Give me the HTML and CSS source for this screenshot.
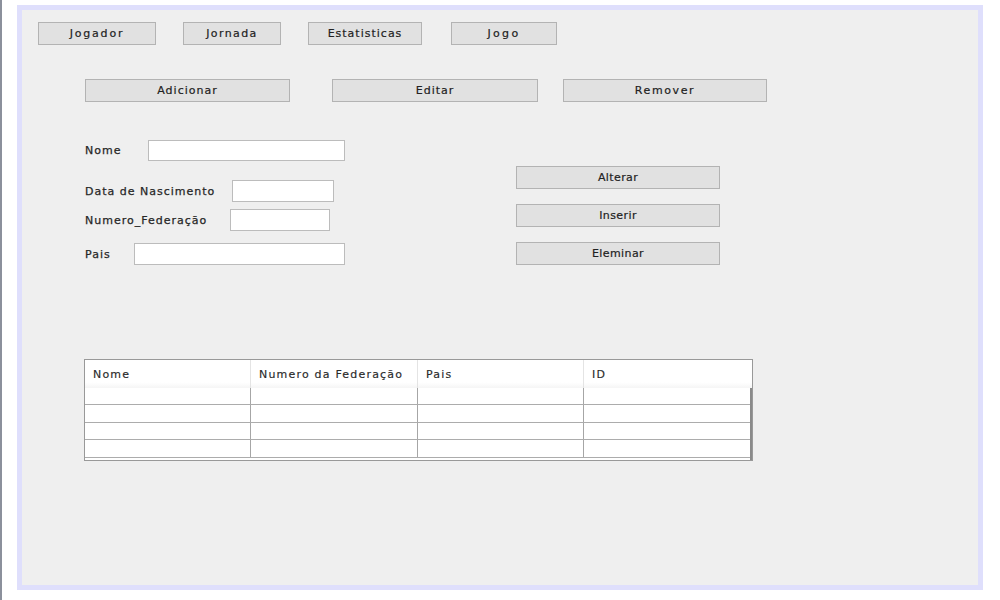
FILE: index.html
```html
<!DOCTYPE html>
<html lang="pt">
<head>
<meta charset="utf-8">
<title>Jogador</title>
<link rel="stylesheet" href="styles.css">
</head>
<body>
<div class="screen">
  <div class="edge"></div>
  <div class="frame">
    <nav class="tabs">
      <button class="btn tab tab-jogador">Jogador</button>
      <button class="btn tab tab-jornada">Jornada</button>
      <button class="btn tab tab-estat">Estatisticas</button>
      <button class="btn tab tab-jogo">Jogo</button>
    </nav>
    <div class="actions">
      <button class="btn act act-add">Adicionar</button>
      <button class="btn act act-edit">Editar</button>
      <button class="btn act act-rem">Remover</button>
    </div>
    <div class="editor">
      <div class="fields">
        <div class="row row-nome"><label class="lab lab-nome">Nome</label><input class="inp inp-nome" type="text"></div>
        <div class="row row-data"><label class="lab lab-data">Data de Nascimento</label><input class="inp inp-data" type="text"></div>
        <div class="row row-num"><label class="lab lab-num">Numero_Federação</label><input class="inp inp-num" type="text"></div>
        <div class="row row-pais"><label class="lab lab-pais">Pais</label><input class="inp inp-pais" type="text"></div>
      </div>
      <div class="ops">
        <button class="btn op">Alterar</button>
        <button class="btn op">Inserir</button>
        <button class="btn op">Eleminar</button>
      </div>
    </div>
    <div class="grid">
      <div class="ghead">
        <div class="hcell">Nome</div>
        <div class="hcell">Numero da Federação</div>
        <div class="hcell">Pais</div>
        <div class="hcell">ID</div>
      </div>
      <div class="gbody">
        <div class="grow"><div class="gcell"></div><div class="gcell"></div><div class="gcell"></div><div class="gcell"></div></div>
        <div class="grow"><div class="gcell"></div><div class="gcell"></div><div class="gcell"></div><div class="gcell"></div></div>
        <div class="grow"><div class="gcell"></div><div class="gcell"></div><div class="gcell"></div><div class="gcell"></div></div>
        <div class="grow"><div class="gcell"></div><div class="gcell"></div><div class="gcell"></div><div class="gcell"></div></div>
      </div>
    </div>
  </div>
</div>
</body>
</html>
```
FILE: styles.css
```css
* { box-sizing: border-box; }
html, body { margin: 0; padding: 0; background: #ffffff; }
body {
  font-family: "DejaVu Sans", Verdana, sans-serif;
  font-size: 11px;
  color: #262626;
}
.screen {
  display: flex;
  align-items: flex-start;
  width: 1000px;
  height: 600px;
  overflow: hidden;
}
.edge {
  width: 2px;
  height: 600px;
  background: #8b909c;
  flex: none;
}
.frame {
  flex: none;
  margin-left: 15px;
  margin-top: 5px;
  width: 966px;
  height: 585px;
  border: 5px solid #dfdffc;
  background: #efefef;
  padding-top: 12px;
}
.btn {
  display: block;
  margin: 0;
  padding: 0;
  height: 23px;
  background: #e1e1e1;
  border: 1px solid #b3b3b3;
  border-radius: 0;
  font-family: "DejaVu Sans", Verdana, sans-serif;
  font-size: 11px;
  color: #222222;
  -webkit-text-stroke: 0.2px #222222;
  letter-spacing: 1px;
  line-height: 21px;
  text-align: center;
}
.tabs {
  display: flex;
  margin-left: 16px;
}
.tab-jogador { width: 118px; letter-spacing: 1.8px; }
.tab-jornada { width: 98px; margin-left: 27px; letter-spacing: 1.4px; }
.tab-estat { width: 114px; margin-left: 27px; }
.tab-jogo { width: 106px; margin-left: 29px; letter-spacing: 2.3px; }

.actions {
  display: flex;
  margin-top: 34px;
  margin-left: 63px;
}
.act-add { width: 205px; }
.act-edit { width: 206px; margin-left: 42px; }
.act-rem { width: 204px; margin-left: 25px; letter-spacing: 1.6px; }

.editor {
  display: flex;
  margin-top: 37px;
  margin-left: 63px;
}
.fields {
  width: 431px;
  display: flex;
  flex-direction: column;
}
.row {
  display: flex;
  align-items: center;
  height: 22px;
}
.row-data { margin-top: 19px; }
.row-num { margin-top: 7px; }
.row-pais { margin-top: 12px; }
.lab {
  flex: none;
  letter-spacing: 1px;
  color: #262626;
  -webkit-text-stroke: 0.25px #262626;
  padding-top: 1px;
}
.lab-nome { width: 63px; }
.lab-data { width: 147px; }
.lab-num { width: 145px; }
.lab-pais { width: 49px; }
.inp {
  height: 22px;
  margin: 0;
  padding: 0 3px;
  background: #ffffff;
  border: 1px solid #bcbcbc;
  border-radius: 0;
  outline: none;
  font-family: "DejaVu Sans", Verdana, sans-serif;
  font-size: 11px;
}
.inp-nome { width: 197px; height: 21px; }
.inp-data { width: 102px; }
.inp-num { width: 100px; }
.inp-pais { width: 211px; }

.ops {
  display: flex;
  flex-direction: column;
  gap: 15px;
  margin-top: 27px;
  width: 204px;
}
.op { width: 204px; letter-spacing: 0.4px; }

.grid {
  margin-top: 94px;
  margin-left: 62px;
  width: 669px;
  height: 102px;
  border: 1px solid #999999;
  background: #ffffff;
}
.ghead {
  display: grid;
  grid-template-columns: 166px 167px 166px 168px;
  height: 28px;
  background: linear-gradient(#ffffff 0, #ffffff 80%, #f5f5f5 100%);
}
.hcell {
  padding-left: 8px;
  padding-top: 2px;
  line-height: 26px;
  letter-spacing: 1.2px;
  color: #2a2a2a;
  -webkit-text-stroke: 0.15px #2a2a2a;
  border-right: 1px solid #e4e4e4;
  white-space: nowrap;
}
.hcell:last-child { border-right: none; }
.gbody {
  width: 667px;
  height: 72px;
  border-right: 2px solid #8a8a8a;
}
.grow {
  display: grid;
  grid-template-columns: 166px 167px 166px 166px;
  height: 17px;
  border-bottom: 1px solid #acacac;
}
.grow:nth-child(even) { height: 18px; }
.gcell {
  border-right: 1px solid #a6a6a6;
}
.gcell:last-child { border-right: none; }
```
